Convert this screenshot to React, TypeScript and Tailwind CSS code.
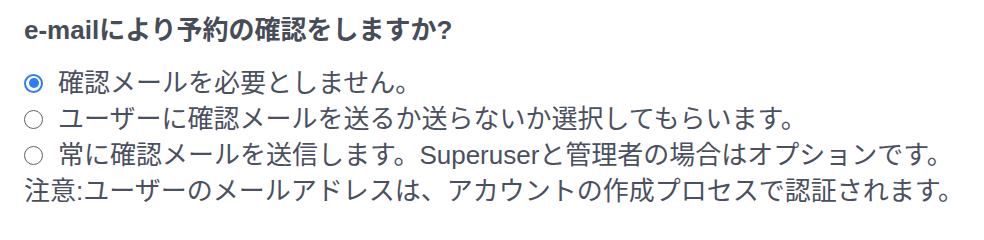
import { useState } from 'react'

const options = [
  '確認メールを必要としません。',
  'ユーザーに確認メールを送るか送らないか選択してもらいます。',
  '常に確認メールを送信します。Superuserと管理者の場合はオプションです。',
]

function Radio({ checked }: { checked: boolean }) {
  if (checked) {
    return (
      <span className="box-border flex h-[19px] w-[19px] shrink-0 items-center justify-center rounded-full border-2 border-[#2f7cf6] bg-white">
        <span className="h-[10px] w-[10px] rounded-full bg-[#2f7cf6]" />
      </span>
    )
  }
  return <span className="box-border h-[19px] w-[19px] shrink-0 rounded-full border border-[#5f6068] bg-white" />
}

export default function App() {
  const [selected, setSelected] = useState(0)

  return (
    <div
      className="h-[232px] w-[984px] bg-white pl-[24px] pt-[12px] text-[#4b5060]"
      style={{ fontFamily: '"Liberation Sans", "Noto Sans CJK JP", sans-serif' }}
    >
      <h2 className="text-[26px] font-bold leading-[36px] text-[#474c59]">
        e-mailにより予約の確認をしますか?
      </h2>

      <div className="mt-[17px] flex flex-col">
        {options.map((label, i) => (
          <label
            key={i}
            onClick={() => setSelected(i)}
            className="flex h-[36px] cursor-pointer items-center gap-[15px] text-[26px]"
          >
            <Radio checked={selected === i} />
            <span className="leading-[36px]">{label}</span>
          </label>
        ))}
        <p className="text-[26px] leading-[36px]">
          注意:ユーザーのメールアドレスは、アカウントの作成プロセスで認証されます。
        </p>
      </div>
    </div>
  )
}
